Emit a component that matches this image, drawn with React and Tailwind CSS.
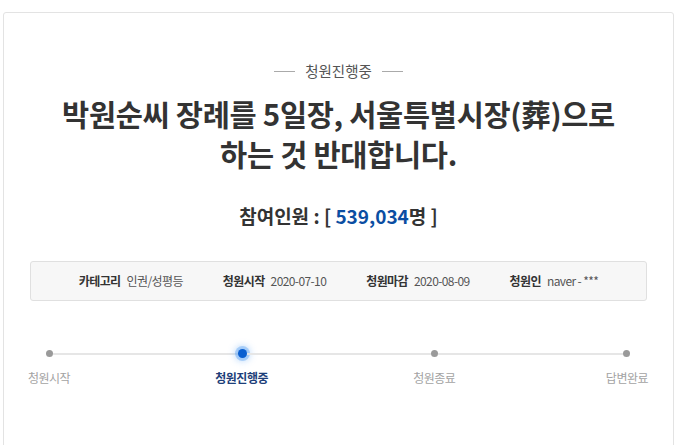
import React from 'react';

const font = { fontFamily: '"Noto Sans CJK KR", "Noto Sans", sans-serif' };

function Dot({ active }) {
  return active ? (
    <span className="block h-[9px] w-[9px] shrink-0 rounded-full bg-[#0a5fd0] shadow-[0_0_0_3px_rgba(70,150,240,0.35),0_0_6px_4px_rgba(100,170,245,0.35)]" />
  ) : (
    <span className="block h-[7px] w-[7px] shrink-0 rounded-full bg-[#9a9a9a]" />
  );
}

function Line() {
  return <div className="h-[2px] flex-1 bg-[#e6e6e6]" />;
}

function Label({ children, active }) {
  return (
    <span
      className={`w-[64px] whitespace-nowrap text-center text-[12px] leading-[16px] tracking-[-0.04em] ${
        active ? 'font-bold text-[#1e3f7a]' : 'text-[#a3a3a3]'
      }`}
    >
      {children}
    </span>
  );
}

function Info({ label, value }) {
  return (
    <div className="flex items-center gap-[6px] whitespace-nowrap text-[12px] tracking-[-0.05em]">
      <span className="font-bold text-[#333]">{label}</span>
      <span className="text-[#555]">{value}</span>
    </div>
  );
}

export default function App() {
  return (
    <div className="h-[445px] w-[680px] overflow-hidden bg-white pl-[3px] pr-[6px] pt-[12px]" style={font}>
      <div className="h-[460px] rounded-t-[3px] border border-[#e3e3e3] bg-white">
        {/* status */}
        <div className="mt-[48px] flex items-center justify-center gap-[10px]">
          <span className="h-px w-[21px] bg-[#aaa]" />
          <span className="text-[14.5px] leading-[20px] text-[#555]">청원진행중</span>
          <span className="h-px w-[21px] bg-[#aaa]" />
        </div>

        {/* title */}
        <h1 className="mt-[12px] text-center text-[29.5px] font-bold leading-[40px] tracking-[-0.01em] text-[#333]">
          박원순씨 장례를 5일장, 서울특별시장(葬)으로
          <br />
          하는 것 반대합니다.
        </h1>

        {/* participants */}
        <div className="mt-[30px] text-center text-[19px] font-bold leading-[26px] text-[#333]">
          참여인원 : [ <span className="text-[#0b4ea2]">539,034</span>명 ]
        </div>

        {/* info box */}
        <div className="mx-[26px] mt-[32px] flex h-[40px] items-center justify-center gap-[40px] rounded-[3px] border border-[#e0e0e0] bg-[#f7f7f7]">
          <Info label="카테고리" value="인권/성평등" />
          <Info label="청원시작" value="2020-07-10" />
          <Info label="청원마감" value="2020-08-09" />
          <Info label="청원인" value="naver - ***" />
        </div>

        {/* progress */}
        <div className="mt-[48px] ml-[42px] mr-[43px] flex items-center">
          <Dot />
          <Line />
          <Dot active />
          <Line />
          <Dot />
          <Line />
          <Dot />
        </div>
        <div className="mt-[12px] ml-[13px] mr-[14px] flex justify-between">
          <Label>청원시작</Label>
          <Label active>청원진행중</Label>
          <Label>청원종료</Label>
          <Label>답변완료</Label>
        </div>
      </div>
    </div>
  );
}
